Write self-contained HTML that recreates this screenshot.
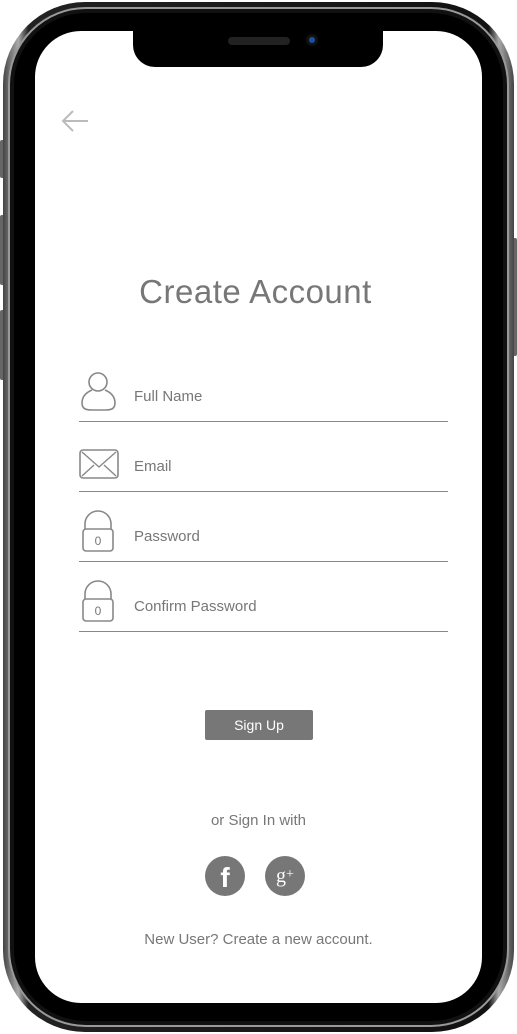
<!DOCTYPE html>
<html><head><meta charset="utf-8"><style>
*{margin:0;padding:0;box-sizing:border-box}
body{width:517px;height:1034px;background:#fff;position:relative;overflow:hidden;font-family:"Liberation Sans",sans-serif;color:#777}
.abs{position:absolute}
.btn{position:absolute;background:#666;border-radius:2px;width:6px}
.outer{left:3px;top:2px;width:511px;height:1030px;border-radius:82px;background:linear-gradient(90deg,#444,#aaa 3%,#222 5%,#111 95%,#aaa 97%,#444);}
.o2{left:8px;top:7px;width:501px;height:1020px;border-radius:78px;background:#111;border:2px solid #999}
.o3{left:14px;top:13px;width:489px;height:1008px;border-radius:72px;background:#000}
.screen{left:35px;top:31px;width:447px;height:972px;border-radius:46px;background:#fff;overflow:hidden}
.notch{left:98px;top:-1px;width:250px;height:37px;background:#000;border-radius:0 0 22px 22px}
.field{position:absolute;left:44px;width:369px;height:1px;background:#888}
.lbl{position:absolute;left:99px;font-size:15px;color:#777}
</style></head><body>
<div class="btn" style="left:0;top:140px;height:38px"></div>
<div class="btn" style="left:0;top:215px;height:70px"></div>
<div class="btn" style="left:0;top:310px;height:70px"></div>
<div class="btn" style="left:511px;top:238px;height:118px"></div>
<div class="abs outer"></div>
<div class="abs o2"></div>
<div class="abs o3"></div>
<div class="abs screen">
  <div class="abs notch">
    <div class="abs" style="left:95px;top:7px;width:62px;height:8px;border-radius:4px;background:#222"></div>
    <div class="abs" style="left:173px;top:4px;width:12px;height:12px;border-radius:50%;background:#111"><div style="margin:3px;width:6px;height:6px;border-radius:50%;background:#1d4fa0"></div></div>
  </div>
  <svg class="abs" style="left:25px;top:78px" width="30" height="24" viewBox="0 0 30 24"><path d="M28 12H3M13 2L3 12l10 10" fill="none" stroke="#bbb" stroke-width="2"/></svg>
  <div class="abs" style="left:0;top:242px;width:441px;text-align:center;font-size:33px;color:#777;font-family:'Liberation Sans',sans-serif;letter-spacing:0.5px">Create Account</div>

  <svg class="abs" style="left:44px;top:339px" width="40" height="44" viewBox="0 0 40 44"><circle cx="19" cy="12" r="9" fill="none" stroke="#888" stroke-width="1.6"/><path d="M13 20C6 23 3 27 3 33c0 6 4 7 10 7h13c6 0 10-1 10-7 0-6-3-10-10-13" fill="none" stroke="#888" stroke-width="1.6"/></svg>
  <div class="lbl" style="top:357px">Full Name</div>
  <div class="field" style="top:390px"></div>

  <svg class="abs" style="left:44px;top:418px" width="42" height="32" viewBox="0 0 42 32"><rect x="1" y="1" width="38" height="28" rx="3" fill="none" stroke="#888" stroke-width="1.6"/><path d="M3 3l17 15 17-15M3 27l12-11M37 27l-12-11" fill="none" stroke="#888" stroke-width="1.4"/></svg>
  <div class="lbl" style="top:427px">Email</div>
  <div class="field" style="top:460px"></div>

  <svg class="abs" style="left:44px;top:479px" width="40" height="44" viewBox="0 0 40 44"><path d="M6 20v-6a13 13 0 0 1 26 0v6" fill="none" stroke="#888" stroke-width="1.6"/><rect x="4" y="19" width="30" height="22" rx="3" fill="#fff" stroke="#888" stroke-width="1.6"/><text x="19" y="35" text-anchor="middle" font-size="12" fill="#777" font-family="Liberation Sans">0</text></svg>
  <div class="lbl" style="top:497px">Password</div>
  <div class="field" style="top:530px"></div>

  <svg class="abs" style="left:44px;top:549px" width="40" height="44" viewBox="0 0 40 44"><path d="M6 20v-6a13 13 0 0 1 26 0v6" fill="none" stroke="#888" stroke-width="1.6"/><rect x="4" y="19" width="30" height="22" rx="3" fill="#fff" stroke="#888" stroke-width="1.6"/><text x="19" y="35" text-anchor="middle" font-size="12" fill="#777" font-family="Liberation Sans">0</text></svg>
  <div class="lbl" style="top:567px">Confirm Password</div>
  <div class="field" style="top:600px"></div>

  <div class="abs" style="left:170px;top:679px;width:108px;height:30px;background:#777;border-radius:2px;color:#fff;font-size:14px;text-align:center;line-height:30px">Sign Up</div>
  <div class="abs" style="left:0;top:781px;width:447px;text-align:center;font-size:15px;color:#777">or Sign In with</div>
  <div class="abs" style="left:170px;top:825px;width:40px;height:40px;border-radius:50%;background:#777;color:#fff;text-align:center;font-size:28px;font-weight:bold;line-height:44px">f</div>
  <div class="abs" style="left:230px;top:825px;width:40px;height:40px;border-radius:50%;background:#777;color:#fff;text-align:center;font-size:20px;line-height:38px;font-family:'Liberation Serif',serif">g<span style="font-size:14px;vertical-align:4px">+</span></div>
  <div class="abs" style="left:0;top:900px;width:447px;text-align:center;font-size:15px;color:#777">New User? Create a new account.</div>
</div>
</body></html>
